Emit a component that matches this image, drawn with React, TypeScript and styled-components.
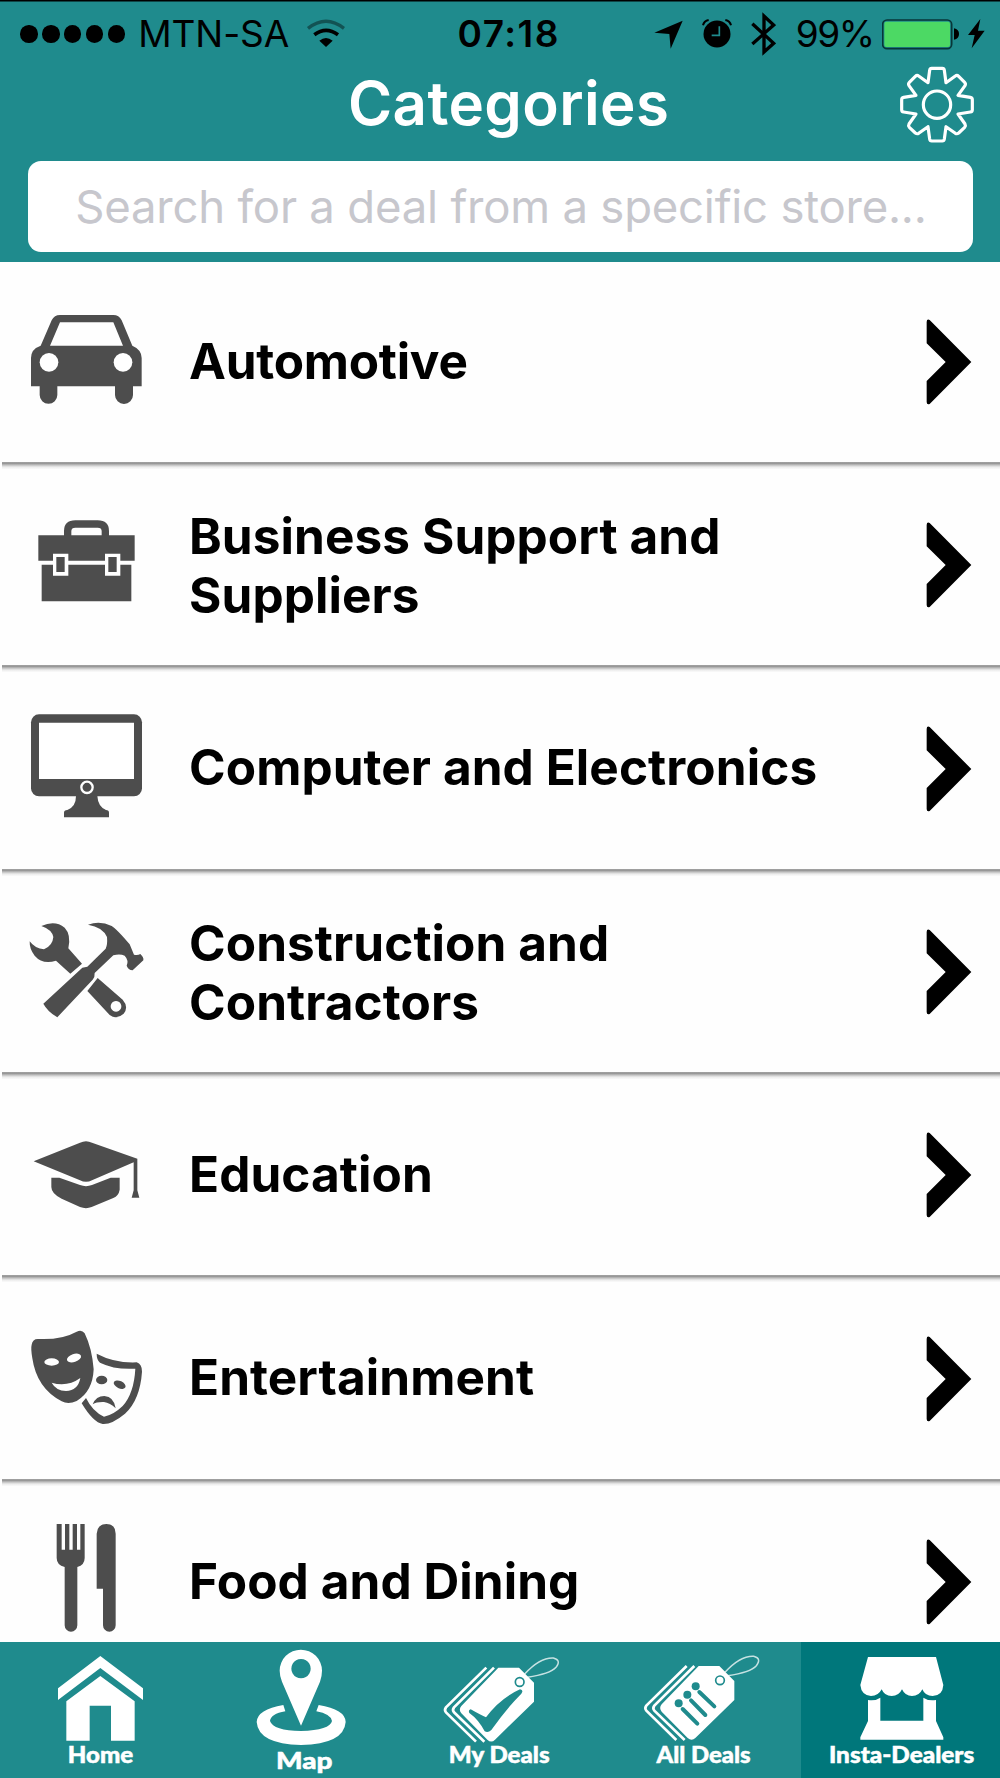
import React from 'react';
import styled, { createGlobalStyle } from 'styled-components';

const teal = '#1f8b8d';
const tealDark = '#00777b';
const ink = '#4d4d4d';

const GlobalStyle = createGlobalStyle`
  * { box-sizing: border-box; }
  body { margin: 0; background: #fff; font-family: Inter, "Liberation Sans", sans-serif; }
`;

const Screen = styled.div`
  display: flex;
  flex-direction: column;
  width: 1000px;
  height: 1778px;
  overflow: hidden;
  background: #fefefe;
`;

const Header = styled.header`
  flex: none;
  height: 261.6px;
  background: ${teal};
  box-shadow: inset 0 1.5px 0 #000;
  z-index: 1;
`;

const StatusBar = styled.div`
  display: grid;
  grid-template-columns: 457.5px 196.5px 1fr;
  align-items: center;
  height: 68px;
  font-size: 37px;
  line-height: 68px;
  color: #000;
  white-space: nowrap;
`;

const StatusLeft = styled.div`
  display: flex;
  align-items: center;
  padding-left: 20.3px;
`;

const Dots = styled.div`
  display: flex;
  gap: 4.5px;
  margin-right: 13px;
`;

const Dot = styled.span`
  width: 17.4px;
  height: 17.4px;
  border-radius: 50%;
  background: #000;
`;

const Carrier = styled.span`
  width: 167.7px;
  letter-spacing: -0.1px;
`;

const Clock = styled.span`
  font-weight: 600;
  letter-spacing: 1.5px;
`;

const StatusRight = styled.div`
  display: grid;
  grid-template-columns: 48px 49px 44px 87px 86px 19px;
`;

const Percent = styled.span`
  margin-left: 0.7px;
  letter-spacing: -1.4px;
`;

const Glyph = styled.svg<{ $w: number; $h: number }>`
  display: block;
  flex: none;
  width: ${(p) => p.$w}px;
  height: ${(p) => p.$h}px;
`;

const TitleBar = styled.div`
  display: grid;
  grid-template-columns: 348px 1fr auto;
  grid-template-rows: 71px;
  align-items: center;
  height: 71px;
  padding-right: 25px;
`;

const Title = styled.h1`
  grid-column: 2;
  margin: 0;
  font-size: 60px;
  font-weight: 610;
  line-height: 71px;
  letter-spacing: 0.4px;
  color: #fff;
`;

const SearchBox = styled.div`
  display: flex;
  align-items: center;
  height: 91px;
  margin: 22.2px 27.3px 0 28.3px;
  padding: 0 0 1px 47px;
  border-radius: 13px;
  background: #fff;
  font-size: 45.5px;
  letter-spacing: -0.22px;
  color: #c7c7cd;
  white-space: nowrap;
`;

const List = styled.main`
  flex: 1;
  min-height: 0;
  margin-top: -2.9px;
  overflow: hidden;
`;

const Row = styled.div`
  display: flex;
  align-items: center;
  height: 203.33px;
  padding: 0 28px;
  & + & {
    background: linear-gradient(#a2a2a2 0, #989898 1.5px, #c0c0c0 3px, #ececec 5px, #fefefe 7.5px)
      2px 0 / calc(100% - 2px) 7.5px no-repeat;
  }
`;

const Label = styled.span<{ $tall?: boolean; $track?: number }>`
  width: 700px;
  margin-left: 43px;
  margin-right: -1px;
  margin-top: ${(p) => (p.$tall ? 5.5 : 2)}px;
  font-size: 49.5px;
  font-weight: 680;
  line-height: 59.5px;
  letter-spacing: ${(p) => p.$track ?? 0.08}px;
  color: #000;
`;

const Chevron = styled(Glyph)`
  margin-top: 3px;
  margin-left: 38.5px;
`;

const TabBar = styled.nav`
  flex: none;
  display: grid;
  grid-template-columns: repeat(5, 200px);
  height: 136px;
  background: ${teal};
`;

const Tab = styled.a<{ $active?: boolean }>`
  display: flex;
  flex-direction: column;
  align-items: center;
  background: ${(p) => (p.$active ? `linear-gradient(${tealDark}, ${tealDark}) 1px 0 no-repeat` : 'none')};
`;

const TabLabel = styled.span<{ $size?: number; $drop?: number; $shift: number; $stretch: number }>`
  margin-top: ${(p) => p.$drop ?? 0.7}px;
  font-family: Lato, "Liberation Sans", sans-serif;
  font-size: ${(p) => p.$size ?? 22.5}px;
  font-weight: 900;
  line-height: 16px;
  white-space: nowrap;
  color: #fff;
  -webkit-text-stroke: 0.5px #fff;
  transform: translateX(${(p) => p.$shift}px) scaleX(${(p) => p.$stretch});
`;

const CarIcon = () => (
  <Glyph $w={118} $h={118} viewBox="84 34 354 354" fill={ink}>
    <path fillRule="evenodd" d="M93 290V205Q93 178 122 168L155 92Q163 76 180 76H340Q357 76 365 92L397 168Q425 180 425 205V290H399V316a27 27 0 0 1-54 0V290H172V316a26.500 26.500 0 0 1-53 0V290ZM150 168H369L340 98H180Z" />
    <circle cx="147" cy="218" r="28" fill="#fff" />
    <circle cx="369" cy="218" r="28" fill="#fff" />
  </Glyph>
);

const BriefcaseIcon = () => (
  <Glyph $w={118} $h={118} viewBox="84 644 354 354" fill={ink}>
    <path d="M203 738V722Q203 701 226 701H293Q316 701 316 722V738" fill="none" stroke={ink} strokeWidth="22" />
    <path d="M115 735H404V811H115ZM125 823H394V933H125Z" />
    <path d="M159 790h46v66h-46ZM315 790h46v66h-46Z" fill="#fff" />
    <path d="M169 800h25v45h-25ZM325 800h25v45h-25Z" />
  </Glyph>
);

const ComputerIcon = () => (
  <Glyph $w={118} $h={118} viewBox="84 54 354 354" fill={ink}>
    <rect x="93" y="73" width="333" height="246" rx="24" />
    <path d="M117 98H402V267H117Z" fill="#fff" />
    <circle cx="261" cy="292" r="17" fill="none" stroke="#fff" strokeWidth="7" />
    <path d="M228 318H292Q294 350 318 360Q327 361 327 368V382H192V368Q192 361 202 360Q228 350 228 318Z" />
  </Glyph>
);

const ToolsIcon = () => (
  <Glyph $w={118} $h={118} viewBox="84 664 354 354" fill={ink}>
    <path d="M124 709Q165 690 194 714Q214 735 205 776L246 822L211 852L168 813Q128 826 104 798Q88 778 89 755Q105 777 132 779Q158 768 160 742Q156 720 124 709Z" />
    <path fillRule="evenodd" d="M293 865L368 930Q387 952 371 972Q350 991 329 976L262 904ZM348 934a16 16 0 1 0 .1 0Z" />
    <path d="M130 942L247 834L262 831L317 777Q323 765 321 742Q308 712 264 705Q300 692 335 709Q350 718 389 764L402 795Q413 798 421 793Q432 803 430 812L398 842Q384 840 380 828Q387 812 374 798Q360 792 340 797L284 850Q285 862 278 870L172 983Q142 965 130 942Z" />
  </Glyph>
);

const GraduationIcon = () => (
  <Glyph $w={118} $h={118} viewBox="84 14 354 354" fill={ink}>
    <path d="M101 153L240 97Q258 88 276 97L412 145V240L418 262H395L401 240V156L276 210Q258 219 240 210Z" />
    <path d="M154 202H178L240 224Q258 231 276 224L332 202H359V238Q356 256 340 263L275 290Q258 297 240 290L185 265Q154 250 154 230Z" />
  </Glyph>
);

const MasksIcon = () => (
  <Glyph $w={118} $h={118} viewBox="84 624 354 354" fill={ink}>
    <path d="M95 704Q98 685 117 687Q185 690 230 665Q245 657 254 670Q276 715 281 778Q278 845 230 873Q205 884 185 874Q110 835 97 745Q92 715 95 704Z" />
    <ellipse cx="155" cy="756" rx="22" ry="11" fill="#fff" />
    <ellipse cx="222" cy="744" rx="22" ry="12" fill="#fff" transform="rotate(-18 222 744)" />
    <path d="M155 818Q202 832 241 804Q234 842 198 843Q168 842 155 818Z" fill="#fff" />
    <path d="M290 731Q345 760 410 757Q426 762 426 785Q420 870 375 911Q335 944 308 942Q280 938 245 880L258 864Q278 905 312 920Q340 915 368 888Q402 850 406 776Q345 780 300 758Q290 750 290 731Z" />
    <ellipse cx="305" cy="810" rx="17" ry="13" />
    <ellipse cx="359" cy="824" rx="19" ry="11" transform="rotate(25 359 824)" />
    <path d="M278 883Q288 858 313 858Q342 860 347 895Q330 878 312 876Q290 875 278 883Z" />
  </Glyph>
);

const CutleryIcon = () => (
  <Glyph $w={118} $h={118} viewBox="84 154 354 354" fill={ink}>
    <path d="M170 163h15V240h10V163h13v77h10V163h13V240h10V163h13V265Q254 286 232 292V467a19 19 0 0 1-38 0V292Q170 286 170 265Z" />
    <path d="M290 357V192Q292 163 319 163Q347 163 347 192V467a19 19 0 0 1-38 0V357Z" />
  </Glyph>
);

const HomeIcon = () => (
  <Glyph $w={200} $h={104} viewBox="0 516 600 312" fill="#fff">
    <path d="M301 558L429 655V690L301 594L174 690V655ZM301 618L404 694V812H333V707H269V812H199V694Z" />
  </Glyph>
);

const MapIcon = () => (
  <Glyph $w={200} $h={104} viewBox="-120 6 600 312" fill="#fff">
    <path fillRule="evenodd" d="M183 257L126 125Q119 108 119 92A63.500 63 0 0 1 246 92Q246 108 240 125ZM183 57a29 29 0 1 0 .1 0Z" />
    <path d="M130 195L136 214Q92 222 90 243Q100 272 183 273Q270 270 276 243Q272 222 229 214L236 195Q316 208 317 246Q312 312 183 315Q55 312 50 246Q52 208 130 195Z" />
  </Glyph>
);

const TagStack = () => (
  <>
    <path d="M499 113L378 232Q372 240 378 247L468 335M522 113L402 232Q396 240 402 247L493 335" fill="none" stroke="#fff" strokeWidth="8" />
    <path d="M535 113H597L642 158V215L525 329Q514 340 502 329L424 250Q415 239 424 228Z" />
    <circle cx="599" cy="156" r="13" fill="none" stroke={teal} strokeWidth="5" />
    <path d="M614 132Q660 82 700 84Q725 90 708 112Q690 132 622 142" fill="none" stroke="#fff" strokeOpacity="0.75" strokeWidth="4.5" />
  </>
);

const MyDealsIcon = () => (
  <Glyph $w={200} $h={104} viewBox="240 36 600 312" fill="#fff">
    <TagStack />
    <path d="M452 238Q480 254 498 262Q540 205 600 178Q612 180 604 191Q560 235 514 300Q504 310 494 304Q475 268 448 249Q444 240 452 238Z" fill={teal} />
  </Glyph>
);

const AllDealsIcon = () => (
  <Glyph $w={200} $h={104} viewBox="-120 36 600 312" fill="#fff">
    <g transform="translate(-359 -5)">
      <TagStack />
    </g>
    <g fill={teal}>
      <circle cx="116" cy="220" r="12" />
      <circle cx="142" cy="194" r="12" />
      <circle cx="167" cy="169" r="12" />
    </g>
    <path d="M128 237L172 281M153 211L196 255M178 186L223 229" stroke={teal} strokeWidth="12" strokeLinecap="round" />
  </Glyph>
);

const StoreIcon = () => (
  <Glyph $w={200} $h={104} viewBox="480 36 600 312" fill="#fff">
    <path d="M684 81H888L910 165Q908 197 878 198Q855 198 847 178Q838 198 816 198Q795 198 786 178Q777 198 755 198Q733 198 725 178Q715 198 693 198Q664 196 661 165Z" />
    <path d="M684 210Q705 214 721 203V272H850V203Q866 214 888 210V273L910 322V329H661V322L684 273Z" />
  </Glyph>
);

const categories = [
  { name: 'Automotive', Icon: CarIcon, track: -0.25 },
  { name: 'Business Support and Suppliers', Icon: BriefcaseIcon, tall: true },
  { name: 'Computer and Electronics', Icon: ComputerIcon },
  { name: 'Construction and Contractors', Icon: ToolsIcon, tall: true },
  { name: 'Education', Icon: GraduationIcon },
  { name: 'Entertainment', Icon: MasksIcon },
  { name: 'Food and Dining', Icon: CutleryIcon },
];

const tabs = [
  { name: 'Home', Icon: HomeIcon, shift: 1, stretch: 1.07 },
  { name: 'Map', Icon: MapIcon, shift: 4.5, stretch: 1.19, size: 23.5, drop: 6.3 },
  { name: 'My Deals', Icon: MyDealsIcon, shift: -0.9, stretch: 1.07 },
  { name: 'All Deals', Icon: AllDealsIcon, shift: 3.2, stretch: 1.06 },
  { name: 'Insta-Dealers', Icon: StoreIcon, shift: 1.3, stretch: 1.08, active: true },
];

export default function App() {
  return (
    <>
      <GlobalStyle />
      <Screen>
        <Header>
          <StatusBar>
            <StatusLeft>
              <Dots>
                <Dot /><Dot /><Dot /><Dot /><Dot />
              </Dots>
              <Carrier>MTN-SA</Carrier>
              <Glyph $w={39} $h={68} viewBox="918 0 117 204">
                <path d="M978 141L958 122Q978 106 998 122Z" />
                <path d="M943 104Q978 78 1014 104" fill="none" stroke="#000" strokeWidth="11" />
                <path d="M924 85Q978 42 1032 85" fill="none" stroke="#000" strokeOpacity="0.4" strokeWidth="10" />
              </Glyph>
            </StatusLeft>
            <Clock>07:18</Clock>
            <StatusRight>
              <Glyph $w={29} $h={68} viewBox="461 0 87 204">
                <path d="M547 62L511 146L507 102L462 98Z" />
              </Glyph>
              <Glyph $w={30} $h={68} viewBox="606 0 90 204">
                <circle cx="651" cy="102" r="40.500" />
                <path d="M609 76Q612 63 626 60M693 76Q690 63 676 60" fill="none" stroke="#000" strokeWidth="6" />
                <path d="M658 79V106H635" fill="none" stroke={teal} strokeWidth="5" />
              </Glyph>
              <Glyph $w={25} $h={68} viewBox="751 0 75 204">
                <path d="M755 71L819 130L790 156V48L819 75L755 132" fill="none" stroke="#000" strokeWidth="10" />
              </Glyph>
              <Percent>99%</Percent>
              <Glyph $w={77} $h={68} viewBox="1146 0 231 204">
                <rect x="1148" y="60" width="207" height="86" rx="13" fill="none" stroke="#083638" strokeWidth="5" />
                <rect x="1153" y="65" width="197" height="76" rx="6" fill="#4cd964" />
                <path d="M1362 85Q1377 88 1377 102Q1377 116 1362 119Z" />
              </Glyph>
              <Glyph $w={17} $h={68} viewBox="1404 0 51 204">
                <path d="M1441 57L1404 105H1424L1415 145L1454 92H1434Z" />
              </Glyph>
            </StatusRight>
          </StatusBar>
          <TitleBar>
            <Title>Categories</Title>
            <Glyph $w={76} $h={80} viewBox="1197 191 228 240" fill="none" stroke="#fff" strokeWidth="9.5" strokeLinejoin="round">
              <path d="M1295 204H1327Q1332 204 1333 210L1338 247L1366 227Q1371 223 1376 228L1394 246Q1398 250 1395 256L1374 285L1411 291Q1417 292 1417 298V328Q1417 334 1411 335L1374 341L1395 371Q1398 376 1394 381L1376 398Q1371 402 1366 399L1338 379L1333 416Q1332 422 1327 422H1295Q1290 422 1289 416L1284 379L1256 399Q1251 402 1246 398L1228 381Q1224 376 1227 371L1248 341L1211 335Q1205 334 1205 328V298Q1205 292 1211 291L1248 285L1227 256Q1224 250 1228 246L1246 228Q1251 223 1256 227L1284 247L1289 210Q1290 204 1295 204Z" />
              <circle cx="1311" cy="313" r="41" />
            </Glyph>
          </TitleBar>
          <SearchBox>Search for a deal from a specific store...</SearchBox>
        </Header>
        <List>
          {categories.map(({ name, Icon, tall, track }) => (
            <Row key={name}>
              <Icon />
              <Label $tall={tall} $track={track}>{name}</Label>
              <Chevron $w={46} $h={86} viewBox="199 57 138 258">
                <path d="M201 66Q201 56 210 60L335 186L210 312Q201 315 201 306V243L258 186L201 130Z" />
              </Chevron>
            </Row>
          ))}
        </List>
        <TabBar>
          {tabs.map(({ name, Icon, shift, stretch, size, drop, active }) => (
            <Tab key={name} $active={active}>
              <Icon />
              <TabLabel $shift={shift} $stretch={stretch} $size={size} $drop={drop}>{name}</TabLabel>
            </Tab>
          ))}
        </TabBar>
      </Screen>
    </>
  );
}
